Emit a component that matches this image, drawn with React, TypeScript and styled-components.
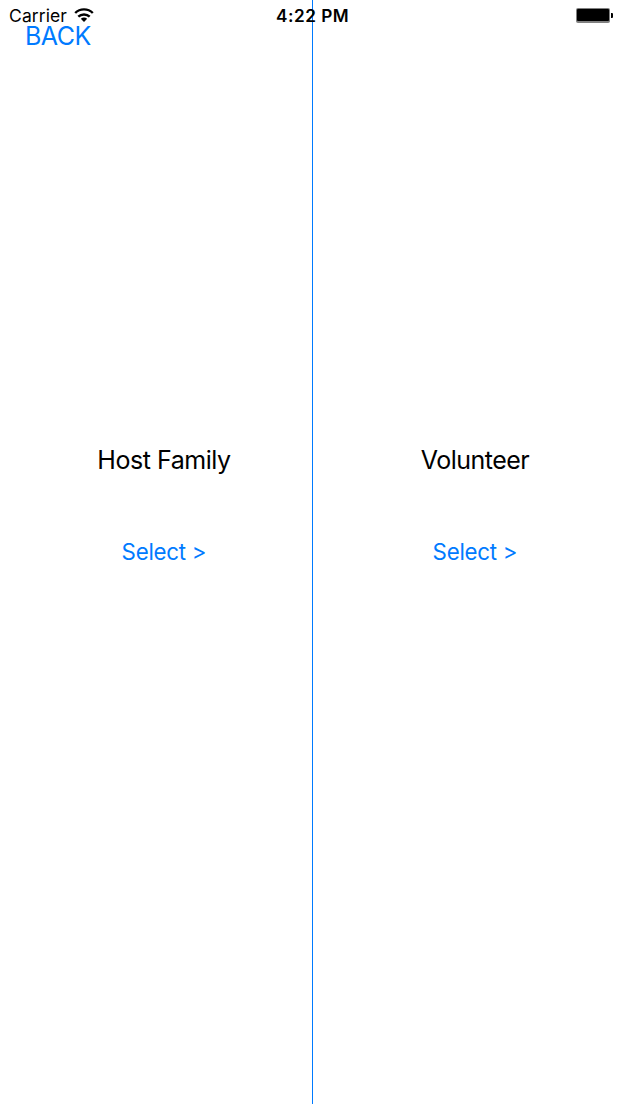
import React from 'react';
import styled, { createGlobalStyle } from 'styled-components';

const GlobalStyle = createGlobalStyle`
  html, body { margin: 0; background: #fff; }
  body { overflow: hidden; font-family: Inter, "Liberation Sans", sans-serif; }
`;

const Screen = styled.main`
  position: relative;
  display: flex;
  width: 621px;
  height: 1104px;
  background: #fff;
`;

const Header = styled.header`
  position: absolute;
  inset: 0 0 auto 0;
`;

const StatusBar = styled.div`
  display: grid;
  grid-template-columns: 276px auto 1fr;
  align-items: center;
  height: 31px;
  padding-right: 8px;
  box-sizing: border-box;
`;

const Network = styled.div`
  display: flex;
  align-items: center;
  gap: 7px;
  padding-left: 9px;
`;

const Label = styled.span<{ $size: number; $weight?: number; $spacing?: number }>`
  font-size: ${p => p.$size}px;
  font-weight: ${p => p.$weight ?? 400};
  letter-spacing: ${p => p.$spacing ?? 0}px;
  line-height: 32px;
  white-space: nowrap;
  color: #000;
`;

const Wifi = styled.svg`
  display: block;
  margin-top: -3px;
`;

const Battery = styled.svg`
  display: block;
  justify-self: end;
  margin-bottom: 1px;
`;

const LinkButton = styled.button<{ $size: number; $spacing?: number }>`
  display: block;
  padding: 0;
  border: 0;
  background: none;
  color: #007aff;
  font-family: inherit;
  font-size: ${p => p.$size}px;
  letter-spacing: ${p => p.$spacing ?? 0}px;
  line-height: 32px;
  white-space: nowrap;
`;

const BackRow = styled.nav`
  padding-left: 25px;
  margin-top: -11px;
`;

const Choices = styled.div`
  display: grid;
  grid-template-columns: 312px 1px 1fr;
  width: 100%;
`;

const Choice = styled.section`
  display: flex;
  flex-direction: column;
  align-items: center;
  gap: 60px;
  padding: 444px 0 0 16px;
  box-sizing: border-box;
`;

const Divider = styled.div`
  background: #007aff;
`;

export default function App() {
  return (
    <>
      <GlobalStyle />
      <Screen>
        <Choices>
          <Choice>
            <Label $size={25} $spacing={-0.45}>Host Family</Label>
            <LinkButton $size={22.3} $spacing={-0.25}>Select &gt;</LinkButton>
          </Choice>
          <Divider />
          <Choice>
            <Label $size={25} $spacing={-0.5}>Volunteer</Label>
            <LinkButton $size={22.3} $spacing={-0.25}>Select &gt;</LinkButton>
          </Choice>
        </Choices>
        <Header>
          <StatusBar>
            <Network>
              <Label $size={17.5} $spacing={0.1}>Carrier</Label>
              <Wifi width="20" height="14" viewBox="0 0 20 14" fill="none" stroke="#000" strokeWidth="2.4">
                <path d="M1.2 5C6 0.2 14 0.2 18.8 5M4.3 8.7C7.4 5.7 12.6 5.7 15.7 8.7" />
                <path d="M10 14L6.8 10.8Q10 8.4 13.2 10.8Z" fill="#000" stroke="none" />
              </Wifi>
            </Network>
            <Label $size={17.2} $weight={600} $spacing={0.5}>4:22 PM</Label>
            <Battery width="37" height="15" viewBox="0 0 37 15">
              <rect width="34" height="15" rx="2" fill="#808080" />
              <rect x="1" y="1" width="32" height="12" rx="1" />
              <path d="M35 5h1q1 0 1 1v3q0 1-1 1h-1z" />
            </Battery>
          </StatusBar>
          <BackRow><LinkButton $size={25} $spacing={-0.5}>BACK</LinkButton></BackRow>
        </Header>
      </Screen>
    </>
  );
}
